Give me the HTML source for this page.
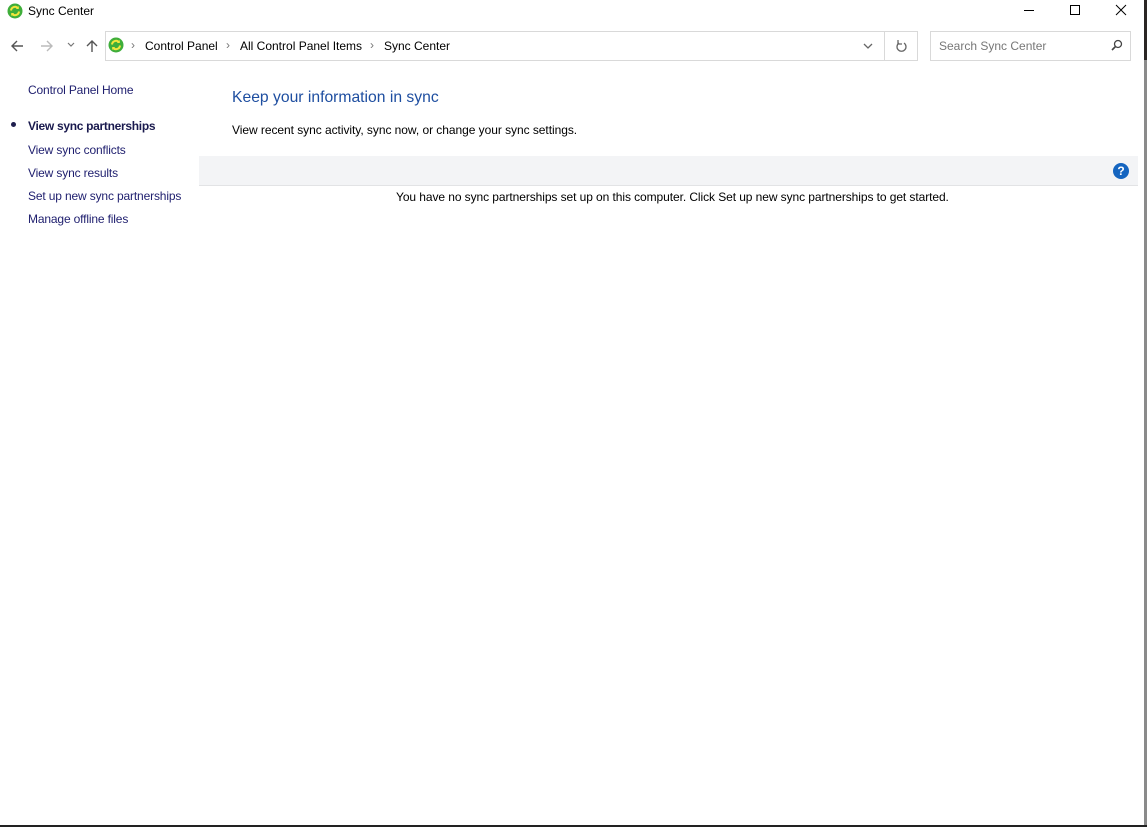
<!DOCTYPE html>
<html><head><meta charset="utf-8"><style>
*{margin:0;padding:0;box-sizing:border-box}
body{width:1147px;height:827px;background:#fff;font-family:"Liberation Sans",sans-serif;font-size:12px;color:#000;position:relative;overflow:hidden}
.a{position:absolute;white-space:nowrap}
.nav{color:#1e1e6e;font-size:12px;letter-spacing:-0.15px}
</style></head><body>
<div class="a" style="left:1144px;top:0;width:3px;height:827px;background:#8a8a8a"></div>
<div class="a" style="left:1144px;top:0;width:3px;height:60px;background:#2a2624"></div>
<div class="a" style="left:0;top:825px;width:1147px;height:2px;background:#222"></div>
<!-- title bar -->
<svg class="a" style="left:7px;top:3px" width="16" height="16" viewBox="0 0 16 16"><circle cx="8" cy="8" r="7.5" fill="#3fae3a"/><path d="M4 7.5a4 4 0 0 1 7-2.3M12 8.5a4 4 0 0 1-7 2.3" stroke="#f3e63c" stroke-width="2" fill="none"/><path d="M11.8 3v3h-3z M4.2 13v-3h3z" fill="#f3e63c"/></svg>
<div class="a" style="left:28px;top:4px;font-size:12px">Sync Center</div>
<div class="a" style="left:1024px;top:10px;width:10px;height:1px;background:#000"></div>
<div class="a" style="left:1070px;top:5px;width:10px;height:10px;border:1px solid #000"></div>
<svg class="a" style="left:1115px;top:4px" width="12" height="12"><path d="M1 1L11 11M11 1L1 11" stroke="#000" stroke-width="1"/></svg>
<!-- nav bar -->
<svg class="a" style="left:10px;top:39px" width="14" height="14"><path d="M13 7H2M7 2L2 7l5 5" stroke="#555" stroke-width="1.4" fill="none"/></svg>
<svg class="a" style="left:40px;top:39px" width="14" height="14"><path d="M1 7h11M7 2l5 5-5 5" stroke="#bbb" stroke-width="1.4" fill="none"/></svg>
<svg class="a" style="left:67px;top:42px" width="8" height="6"><path d="M1 1l3 3 3-3" stroke="#777" stroke-width="1.2" fill="none"/></svg>
<svg class="a" style="left:85px;top:39px" width="14" height="14"><path d="M7 13V2M2 7l5-5 5 5" stroke="#555" stroke-width="1.4" fill="none"/></svg>
<div class="a" style="left:105px;top:31px;width:780px;height:30px;border:1px solid #d9d9d9"></div>
<div class="a" style="left:884px;top:31px;width:34px;height:30px;border:1px solid #d9d9d9"></div>
<svg class="a" style="left:108px;top:37px" width="16" height="16" viewBox="0 0 16 16"><circle cx="8" cy="8" r="7.5" fill="#3fae3a"/><path d="M4 7.5a4 4 0 0 1 7-2.3M12 8.5a4 4 0 0 1-7 2.3" stroke="#f3e63c" stroke-width="2" fill="none"/><path d="M11.8 3v3h-3z M4.2 13v-3h3z" fill="#f3e63c"/></svg>
<div class="a" style="left:131px;top:38px;color:#777">›</div>
<div class="a" style="left:145px;top:39px">Control Panel</div>
<div class="a" style="left:226px;top:38px;color:#777">›</div>
<div class="a" style="left:240px;top:39px">All Control Panel Items</div>
<div class="a" style="left:370px;top:38px;color:#777">›</div>
<div class="a" style="left:384px;top:39px">Sync Center</div>
<svg class="a" style="left:863px;top:43px" width="10" height="6"><path d="M1 1l4 4 4-4" stroke="#666" stroke-width="1.3" fill="none"/></svg>
<svg class="a" style="left:895px;top:39px" width="13" height="14"><path d="M9 4a4.5 4.5 0 1 1-5 0" stroke="#666" stroke-width="1.3" fill="none"/><path d="M3 1v4h4" stroke="#666" stroke-width="1.3" fill="none"/></svg>
<div class="a" style="left:930px;top:31px;width:201px;height:30px;border:1px solid #d9d9d9"></div>
<div class="a" style="left:939px;top:39px;color:#777">Search Sync Center</div>
<svg class="a" style="left:1111px;top:39px" width="12" height="12"><circle cx="7" cy="5" r="3.5" stroke="#444" stroke-width="1.3" fill="none"/><path d="M4.5 7.5L1 11" stroke="#444" stroke-width="1.6"/></svg>
<!-- left nav -->
<div class="a nav" style="left:28px;top:83px">Control Panel Home</div>
<div class="a" style="left:11px;top:122px;width:5px;height:5px;border-radius:50%;background:#1e1e4e"></div>
<div class="a nav" style="left:28px;top:119px;font-weight:bold;color:#1a1a4e;letter-spacing:-0.3px">View sync partnerships</div>
<div class="a nav" style="left:28px;top:143px">View sync conflicts</div>
<div class="a nav" style="left:28px;top:166px">View sync results</div>
<div class="a nav" style="left:28px;top:189px">Set up new sync partnerships</div>
<div class="a nav" style="left:28px;top:212px">Manage offline files</div>
<!-- main -->
<div class="a" style="left:232px;top:89px;font-size:15.7px;color:#1e4ea0">Keep your information in sync</div>
<div class="a" style="left:232px;top:123px;letter-spacing:-0.05px">View recent sync activity, sync now, or change your sync settings.</div>
<div class="a" style="left:199px;top:156px;width:939px;height:30px;background:#f3f4f6;border-bottom:1px solid #e2e3e5"></div>
<div class="a" style="left:1113px;top:163px;width:16px;height:16px;border-radius:50%;background:#1565c0;color:#fff;font-weight:bold;font-size:12px;text-align:center;line-height:16px">?</div>
<div class="a" style="left:396px;top:190px;letter-spacing:-0.08px">You have no sync partnerships set up on this computer. Click Set up new sync partnerships to get started.</div>
</body></html>
